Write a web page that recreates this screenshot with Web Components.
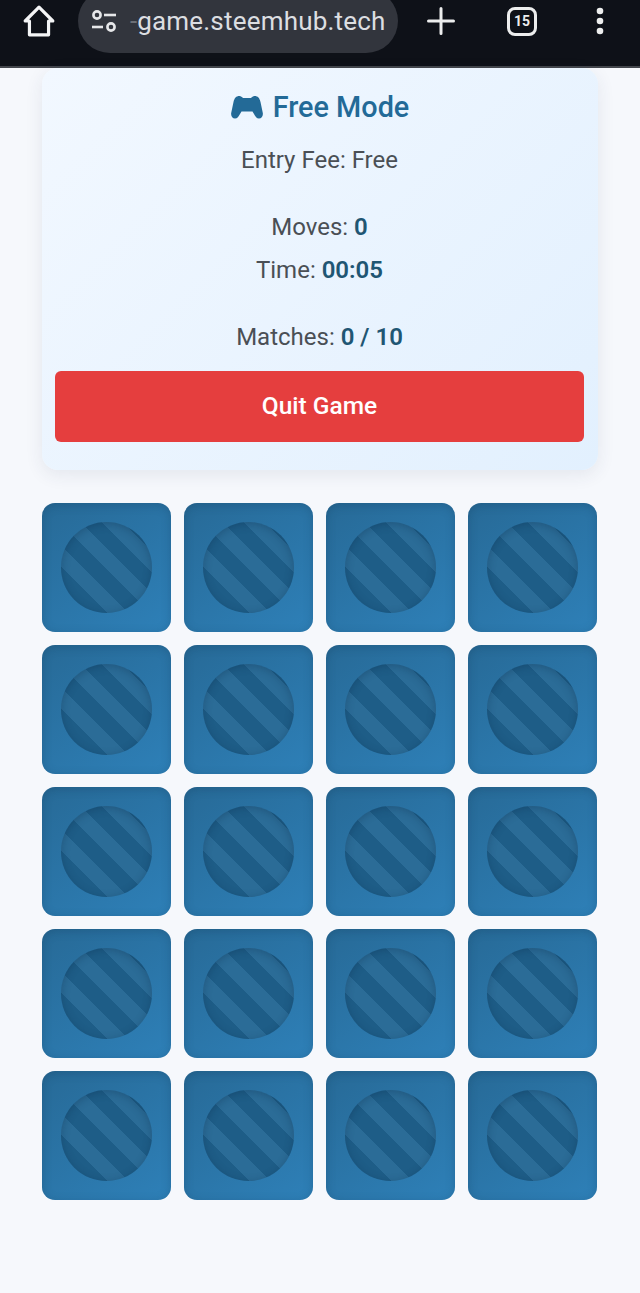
<!DOCTYPE html>
<html>
<head>
<meta charset="utf-8">
<title>Memory game</title>
<style>
    html, body { margin: 0; padding: 0; }
    body {
        width: 640px;
        height: 1293px;
        overflow: hidden;
        background: #f6f8fc;
        font-family: Roboto, "Liberation Sans", sans-serif;
    }
</style>
</head>
<body>
<browser-bar url="game.steemhub.tech" tabs="15"></browser-bar>
<game-page>
    <game-panel mode="Free Mode">
        <stat-line slot="fee" label="Entry Fee:" plain value="Free"></stat-line>
        <stat-line slot="moves" label="Moves:" value="0"></stat-line>
        <stat-line slot="moves" label="Time:" value="00:05"></stat-line>
        <stat-line slot="matches" label="Matches:" value="0 / 10"></stat-line>
    </game-panel>
    <game-board count="20"></game-board>
</game-page>

<script>
// Browser chrome on top of the page
class BrowserBar extends HTMLElement {
    connectedCallback() {
        const url = this.getAttribute('url');
        const tabs = this.getAttribute('tabs');
        this.attachShadow({ mode: 'open' }).innerHTML = `
            <style>
                :host {
                    display: flex;
                    align-items: center;
                    box-sizing: border-box;
                    height: 68px;
                    padding: 0 0 24px 22px;
                    background: #0e1118;
                    border-bottom: 2px solid #43464c;
                    overflow: hidden;
                    font-family: Roboto, "Liberation Sans", sans-serif;
                }
                svg { display: block; flex: none; }
                .pill {
                    display: flex;
                    align-items: center;
                    flex: none;
                    box-sizing: border-box;
                    width: 320px;
                    height: 64px;
                    margin-left: 22px;
                    padding-left: 13px;
                    border-radius: 32px;
                    background: #32353d;
                }
                .fade { margin-left: 13px; font-size: 26px; color: #6c6f76; }
                .url {
                    font-size: 26px;
                    letter-spacing: 0.2px;
                    color: #dcdee1;
                    white-space: nowrap;
                }
                .plus { margin-left: 29px; }
                .tabs {
                    display: flex;
                    align-items: center;
                    justify-content: center;
                    flex: none;
                    box-sizing: border-box;
                    width: 30px;
                    height: 29px;
                    margin-left: 52px;
                    border: 3px solid #eceded;
                    border-radius: 8px;
                    font-size: 14px;
                    font-weight: 700;
                    color: #eceded;
                }
                .more { margin-left: 58px; }
            </style>
            <svg width="34" height="34" viewBox="0 0 32 32" fill="none" stroke="#f4f5f6" stroke-width="3" stroke-linejoin="round">
                <path d="M16 3 L29 16 H25 V29 H7 V16 H3 Z"/>
            </svg>
            <div class="pill">
                <svg width="26" height="24" viewBox="0 0 26 24" fill="none" stroke="#e6e7e9" stroke-width="2.6">
                    <circle cx="6" cy="6" r="3.6"/>
                    <path d="M13 6 H25"/>
                    <path d="M1 18 H12"/>
                    <circle cx="20" cy="18" r="3.6"/>
                </svg>
                <span class="fade">-</span><span class="url">${url}</span>
            </div>
            <svg class="plus" width="28" height="28" viewBox="0 0 28 28" stroke="#eceded" stroke-width="3" stroke-linecap="round">
                <path d="M14 1.5 V26.5 M1.5 14 H26.5"/>
            </svg>
            <div class="tabs">${tabs}</div>
            <svg class="more" width="10" height="30" viewBox="0 0 10 30" fill="#eceded">
                <circle cx="5" cy="5" r="3.3"/>
                <circle cx="5" cy="15" r="3.3"/>
                <circle cx="5" cy="25" r="3.3"/>
            </svg>
        `;
    }
}

// Column that holds the panel and the board
class GamePage extends HTMLElement {
    constructor() {
        super();
        this.attachShadow({ mode: 'open' }).innerHTML = `
            <style>
                :host {
                    display: flex;
                    flex-direction: column;
                    gap: 33px;
                    margin: 0 42px;
                }
            </style>
            <slot></slot>
        `;
    }
}

// Header panel with mode, stats and quit button
class GamePanel extends HTMLElement {
    connectedCallback() {
        const mode = this.getAttribute('mode');
        this.attachShadow({ mode: 'open' }).innerHTML = `
            <style>
                :host {
                    display: block;
                    box-sizing: border-box;
                    height: 402px;
                    padding: 22px 14px 0 13px;
                    border-radius: 16px;
                    background: linear-gradient(135deg, #f2f8ff, #e2f0fe);
                    box-shadow: 0 5px 18px rgba(40, 60, 90, 0.09);
                    text-align: center;
                }
                h2 {
                    display: flex;
                    align-items: center;
                    justify-content: center;
                    gap: 10px;
                    height: 34px;
                    margin: 0 0 15px;
                    font-size: 28.8px;
                    font-weight: 500;
                    color: #236a97;
                }
                svg { display: block; margin-left: 1px; }
                .group { margin-bottom: 24px; }
                .group.last { margin-bottom: 12px; }
                button {
                    display: block;
                    width: 100%;
                    height: 71px;
                    padding: 0 0 2px;
                    border: 0;
                    border-radius: 6px;
                    background: #e53e3e;
                    color: #fff;
                    font: 500 24.5px Roboto, "Liberation Sans", sans-serif;
                }
            </style>
            <h2>
                <svg width="32" height="24" viewBox="0 0 32 24" fill="#236a97">
                    <path d="M8.5 1 C10 1 11 2 12 3 H20 C21 2 22 1 23.5 1 C27 1 28.5 3 29.5 7 L31.8 18 C32.3 21 30.5 23.5 28 23.5 C25.5 23.5 24.5 21.5 23 19 L21.5 16.5 H10.5 L9 19 C7.5 21.5 6.5 23.5 4 23.5 C1.5 23.5 -0.3 21 0.2 18 L2.5 7 C3.5 3 5 1 8.5 1 Z"/>
                </svg>
                <span>${mode}</span>
            </h2>
            <div class="group"><slot name="fee"></slot></div>
            <div class="group"><slot name="moves"></slot></div>
            <div class="group last"><slot name="matches"></slot></div>
            <button>Quit Game</button>
        `;
    }
}

// One label and value row
class StatLine extends HTMLElement {
    connectedCallback() {
        const label = this.getAttribute('label');
        const value = this.getAttribute('value');
        const valueClass = this.hasAttribute('plain') ? 'plain' : 'strong';
        this.attachShadow({ mode: 'open' }).innerHTML = `
            <style>
                :host {
                    display: block;
                    height: 43px;
                    line-height: 43px;
                    font-size: 24px;
                    color: #4a4f55;
                }
                .strong { font-weight: 600; color: #1f5673; }
            </style>
            ${label} <span class="${valueClass}">${value}</span>
        `;
    }
}

// Face down card
class MemoryCard extends HTMLElement {
    constructor() {
        super();
        this.attachShadow({ mode: 'open' }).innerHTML = `
            <style>
                :host {
                    display: flex;
                    align-items: center;
                    justify-content: center;
                    width: 129px;
                    height: 129px;
                    border-radius: 13px;
                    background: linear-gradient(145deg, #276a97, #2e80b8);
                    box-shadow: inset 0 2px 10px rgba(15, 50, 80, 0.25);
                }
                .disc {
                    width: 91px;
                    height: 91px;
                    border-radius: 50%;
                    background:
                        repeating-linear-gradient(45deg,
                            #1e5d87 0 3px,
                            #2b6c97 3px 18px,
                            #1e5d87 18px 30px);
                    box-shadow: inset 0 2px 8px rgba(10, 40, 70, 0.3);
                }
            </style>
            <div class="disc"></div>
        `;
    }
}

// 4 x 5 grid of cards
class GameBoard extends HTMLElement {
    connectedCallback() {
        const count = Number(this.getAttribute('count'));
        this.attachShadow({ mode: 'open' }).innerHTML = `
            <style>
                :host {
                    display: grid;
                    grid-template-columns: repeat(4, 129px);
                    gap: 13px;
                }
            </style>
        `;
        for (let i = 0; i < count; i++) {
            this.shadowRoot.appendChild(document.createElement('memory-card'));
        }
    }
}

customElements.define('browser-bar', BrowserBar);
customElements.define('game-page', GamePage);
customElements.define('game-panel', GamePanel);
customElements.define('stat-line', StatLine);
customElements.define('memory-card', MemoryCard);
customElements.define('game-board', GameBoard);
</script>
</body>
</html>
